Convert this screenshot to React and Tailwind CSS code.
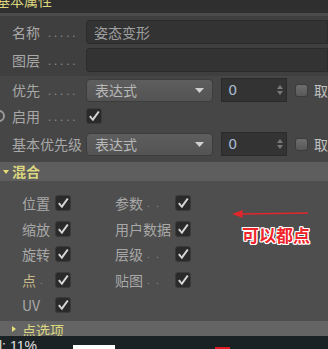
import React from "react";

const font = { fontFamily: '"Noto Sans CJK SC", "Noto Sans", sans-serif' };

function Check({ on = true }) {
  if (!on) {
    return <div className="w-[13px] h-[13px] rounded-[3px] bg-gradient-to-b from-[#6e6e6e] to-[#585858] border border-[#3c3c3c]" />;
  }
  return (
    <div className="w-[16px] h-[16px] rounded-[3px] bg-[#2a2a2a] border border-[#3a3a3a] flex items-center justify-center">
      <svg width="12" height="12" viewBox="0 0 12 12">
        <path d="M1 6.8 L2.8 5.6 L4.6 8.2 L10 1 L11.6 1.9 L5 11.2 Z" fill="#d6d6d6" />
      </svg>
    </div>
  );
}

function Dots() {
  return <span className="ml-[8px] text-[#8a8a8a] text-[11px] tracking-[3px] leading-none">.....</span>;
}

function Label({ children }) {
  return (
    <div className="w-[86px] pl-[12px] flex items-center text-[14px] text-[#a8a8a8] shrink-0">
      <span>{children}</span>
      <Dots />
    </div>
  );
}

function Dropdown() {
  return (
    <div className="w-[130px] h-[23px] rounded-[4px] bg-gradient-to-b from-[#5e5e5e] to-[#535353] border border-[#3c3c3c] flex items-center justify-between px-[8px]">
      <span className="text-[14px] text-[#b8b8b8]">表达式</span>
      <svg width="9" height="5" viewBox="0 0 9 5">
        <path d="M0 0 L9 0 L4.5 5 Z" fill="#d0d0d0" />
      </svg>
    </div>
  );
}

function NumField() {
  return (
    <div className="ml-[8px] w-[67px] h-[24px] bg-[#333333] border border-[#2a2a2a] flex items-center justify-between pl-[6px] pr-[3px]">
      <span className="text-[14px] text-[#a8bcd4]" style={{ fontFamily: '"DejaVu Sans", sans-serif' }}>0</span>
      <svg width="6" height="12" viewBox="0 0 6 12">
        <path d="M0 5 L3 1 L6 5 Z M0 7 L3 11 L6 7 Z" fill="#7a7a7a" />
      </svg>
    </div>
  );
}

function PriorityRow({ label, wide }) {
  return (
    <div className="flex items-center h-[24px]">
      {wide ? (
        <div className="w-[86px] pl-[12px] text-[14px] text-[#a8a8a8] shrink-0">{label}</div>
      ) : (
        <Label>{label}</Label>
      )}
      <Dropdown />
      <NumField />
      <div className="ml-[8px]"><Check on={false} /></div>
      <span className="ml-[6px] text-[14px] text-[#c0c0c0]">取</span>
    </div>
  );
}

function MixItem({ label, dots, color = "#a8a8a8", w }) {
  return (
    <div className="flex items-center h-[16px]">
      <div className={`${w} flex items-center text-[14px] leading-[16px] shrink-0`} style={{ color }}>
        <span>{label}</span>
        {dots && <span className="ml-[4px] text-[10px] text-[#8a8a8a] tracking-[2px]">{dots}</span>}
      </div>
      <Check />
    </div>
  );
}

export default function App() {
  return (
    <div className="w-[328px] h-[349px] overflow-hidden bg-[#464646] flex flex-col relative" style={font}>
      <div className="h-[13px] bg-[#2f2f2f] overflow-hidden shrink-0">
        <div className="-mt-[9px] -ml-[4px] text-[14px] text-[#dcd77e] leading-[18px]">基本属性</div>
      </div>
      <div className="h-[3px] bg-[#4c4c4c] shrink-0" />
      <div className="bg-[#3f3f3f] flex flex-col pt-[4px] pb-[4px] gap-[4px]">
        <div className="flex items-center h-[24px]">
          <Label>名称</Label>
          <div className="flex-1 h-[24px] bg-[#333333] rounded-l-[3px] border border-[#2b2b2b] flex items-center pl-[7px] text-[14px] text-[#a0a0a0]">姿态变形</div>
        </div>
        <div className="flex items-center h-[24px]">
          <Label>图层</Label>
          <div className="flex-1 h-[24px] bg-[#333333] rounded-l-[3px] border border-[#2b2b2b]" />
        </div>
      </div>
      <div className="flex flex-col pt-[2px] pb-[6px]">
        <PriorityRow label="优先" />
        <div className="flex items-center h-[22px] mt-[3px]">
          <div className="w-[86px] flex items-center shrink-0">
            <div className="-ml-[7px] w-[12px] h-[12px] rounded-full border-2 border-[#9a9a9a]" />
            <span className="ml-[7px] text-[14px] text-[#a8a8a8]">启用</span>
            <Dots />
          </div>
          <Check />
        </div>
        <div className="mt-[5px]">
          <PriorityRow label="基本优先级" wide />
        </div>
      </div>
      <div className="h-[19px] bg-[#5e5e5e] flex items-center shrink-0">
        <svg className="ml-[3px]" width="6" height="4" viewBox="0 0 6 4">
          <path d="M0 0 L6 0 L3 4 Z" fill="#e6dc78" />
        </svg>
        <span className="ml-[3px] text-[14px] text-[#dcd77e] font-bold">混合</span>
      </div>
      <div className="flex-1 bg-[#4e4e4e] pt-[14px] pl-[22px] flex flex-col gap-[9.5px]">
        <div className="flex">
          <div className="w-[93px]"><MixItem label="位置" w="w-[33px]" /></div>
          <MixItem label="参数" dots=". ." w="w-[60px]" />
        </div>
        <div className="flex">
          <div className="w-[93px]"><MixItem label="缩放" w="w-[33px]" /></div>
          <MixItem label="用户数据" w="w-[60px]" />
        </div>
        <div className="flex">
          <div className="w-[93px]"><MixItem label="旋转" w="w-[33px]" /></div>
          <MixItem label="层级" dots=". ." w="w-[60px]" />
        </div>
        <div className="flex">
          <div className="w-[93px]"><MixItem label="点" dots="." color="#c8b98a" w="w-[33px]" /></div>
          <MixItem label="贴图" dots=". ." w="w-[60px]" />
        </div>
        <div className="flex">
          <MixItem label="UV" w="w-[33px]" />
        </div>
      </div>
      <div className="h-[15px] bg-[#646464] flex items-center shrink-0 overflow-hidden">
        <svg className="ml-[12px]" width="4" height="6" viewBox="0 0 4 6">
          <path d="M0 0 L4 3 L0 6 Z" fill="#e6dc78" />
        </svg>
        <span className="ml-[6px] mt-[4px] text-[14px] text-[#dcd77e]">点选项</span>
      </div>
      <div className="h-[13px] bg-[#1b2226] shrink-0 flex items-start overflow-hidden">
        <span className="-ml-[1px] mt-[2px] text-[14px] leading-[16px] text-[#e0e0e0] w-[74px] shrink-0" style={{ fontFamily: '"Liberation Sans", sans-serif' }}>l: 11%</span>
        <div className="mt-[9px] w-[42px] h-[4px] bg-white" />
        <div className="mt-[11px] ml-[100px] w-[15px] h-[2px] bg-[#e01b24]" />
      </div>

      <svg className="absolute left-[230px] top-[208px]" width="80" height="12" viewBox="0 0 80 12">
        <path d="M10 6 L78 5" stroke="#e3262b" strokeWidth="1.6" />
        <path d="M2 6 L13 2 L12 6 L13 10 Z" fill="#e3262b" />
      </svg>
      <div
        className="absolute left-[242px] top-[226px] text-[17px] font-bold text-[#f0252b] leading-none"
        style={{ textShadow: "1px 1px 0 #fff, -1px -1px 0 #fff, 1px -1px 0 #fff, -1px 1px 0 #fff, 0 1px 0 #fff, 1px 0 0 #fff, 0 -1px 0 #fff, -1px 0 0 #fff" }}
      >
        可以都点
      </div>
    </div>
  );
}
